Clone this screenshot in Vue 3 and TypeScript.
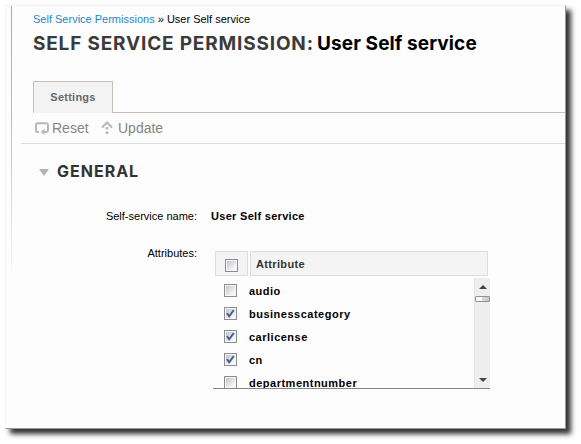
<script setup lang="ts">
import { ref } from 'vue'

interface AttributeRow {
  name: string
  checked: boolean
}

const allChecked = ref(false)
const rows = ref<AttributeRow[]>([
  { name: 'audio', checked: false },
  { name: 'businesscategory', checked: true },
  { name: 'carlicense', checked: true },
  { name: 'cn', checked: true },
  { name: 'departmentnumber', checked: false },
])

function toggleAll() {
  allChecked.value = !allChecked.value
  rows.value.forEach((row) => (row.checked = allChecked.value))
}
</script>

<template>
  <div class="desk">
  <div class="window">
    <main class="page">
      <nav class="crumbs"><a class="link">Self Service Permissions</a> » User Self service</nav>
      <h1 class="title"><span class="kind">SELF SERVICE PERMISSION:</span><span class="entity">User Self service</span></h1>
      <div class="tabs">
        <div class="tab">Settings</div>
        <div class="tab-rest"></div>
      </div>
      <div class="toolbar">
        <a class="action reset">
          <svg width="14" height="13" viewBox="0 0 14 13">
            <path d="M4 10H2.5Q1 10 1 8.5V3Q1 1.2 2.8 1.2H11.2Q13 1.2 13 3V8Q13 10 11 10H8.5" fill="none" stroke="#b9b9b9" stroke-width="2" />
            <path d="M9.5 6.5V13L5.8 10Z" fill="#b9b9b9" />
          </svg>
          <span>Reset</span>
        </a>
        <a class="action update">
          <svg width="12" height="14" viewBox="0 0 12 14">
            <path d="M1 6.5L6 1.6L11 6.5" fill="none" stroke="#b9b9b9" stroke-width="2.2" />
            <path d="M4.6 6H7.4V8.6H4.6ZM4.6 10.4H7.4V13H4.6Z" fill="#b9b9b9" />
          </svg>
          <span>Update</span>
        </a>
      </div>
      <h2 class="section">
        <svg width="10" height="7" viewBox="0 0 10 7"><path d="M0 0H10L5 7Z" fill="#b3b3b3" /></svg>
        <span>GENERAL</span>
      </h2>
      <div class="field name-field">
        <div class="label">Self-service name:</div>
        <div class="value">User Self service</div>
      </div>
      <div class="field">
        <div class="label">Attributes:</div>
        <div class="table">
          <div class="head">
            <div class="head-check"><span class="box" @click="toggleAll"></span></div>
            <div class="head-name">Attribute</div>
          </div>
          <div class="body">
            <div class="rows">
              <div v-for="row in rows" :key="row.name" class="row">
                <span class="box" @click="row.checked = !row.checked">
                  <svg v-if="row.checked" width="9" height="9" viewBox="0 0 9 9">
                    <path d="M1 4.2L3.2 7.3L7.8 1" fill="none" stroke="#4a5f97" stroke-width="2" />
                  </svg>
                </span>
                <span class="name">{{ row.name }}</span>
              </div>
            </div>
            <div class="scroll">
              <svg width="8" height="4" viewBox="0 0 8 4"><path d="M0 4L4 0L8 4Z" fill="#444" /></svg>
              <div class="thumb"></div>
              <svg class="down" width="8" height="4" viewBox="0 0 8 4"><path d="M0 0H8L4 4Z" fill="#444" /></svg>
            </div>
          </div>
        </div>
      </div>
    </main>
  </div>
  </div>
</template>

<style>
body {
  background: #fff;
}
</style>

<style scoped>
.desk {
  box-sizing: border-box;
  height: 444px;
  padding: 5px 0 0 5px;
  overflow: hidden;
}
.window {
  box-sizing: border-box;
  width: 561px;
  height: 424px;
  padding-left: 5px;
  background: #fdfdfd;
  border-top: 1px solid #f3f3f3;
  border-left: 1px solid #f5f5f5;
  border-right: 1px solid #999;
  border-bottom: 1px solid #999;
  box-shadow: 5px 5px 5px 0 #333;
  font-family: "Liberation Sans", Arial, sans-serif;
  font-size: 11px;
  color: #000;
}
.page {
  box-sizing: border-box;
  height: 422px;
  padding-left: 10px;
  background: linear-gradient(#aaa, #bbb 40%, #fdfdfd) 0 0 / 1px 280px no-repeat;
}
.crumbs {
  height: 26px;
  padding: 6px 0 0 12px;
  box-sizing: border-box;
  line-height: 15px;
}
.link {
  color: #1d85cf;
}
.title {
  display: flex;
  gap: 5px;
  margin: 0;
  padding-left: 12px;
  height: 49px;
  line-height: 24px;
  font-family: Inter, sans-serif;
  font-size: 19px;
  font-weight: 700;
  white-space: nowrap;
}
.kind {
  width: 279px;
  color: #3b3b3b;
  letter-spacing: 0.82px;
}
.entity {
  letter-spacing: 0.1px;
}
.tabs {
  display: flex;
  height: 32px;
  padding-left: 12px;
}
.tab {
  box-sizing: border-box;
  width: 80px;
  border: 1px solid #c9c0b5;
  border-bottom: 0;
  background: #f3f3f3;
  color: #686868;
  font-weight: 700;
  line-height: 31px;
  text-align: center;
  letter-spacing: 0.25px;
}
.tab-rest {
  flex: 1;
  border-bottom: 1px solid #c9c0b5;
}
.toolbar {
  box-sizing: border-box;
  display: flex;
  height: 31px;
  padding: 7px 0 0 14px;
  border-bottom: 1px solid #dcdcdc;
  color: #858585;
  font-size: 14px;
  line-height: 17px;
}
.action {
  display: flex;
}
.reset {
  width: 66px;
  gap: 3px;
}
.update {
  gap: 5px;
}
.reset svg {
  margin-top: 2px;
}
.update svg {
  margin-top: 1px;
}
.section {
  display: flex;
  align-items: center;
  gap: 8px;
  margin: 15px 0 0;
  padding-left: 18px;
  height: 24px;
  color: #333;
  font-family: Inter, sans-serif;
  font-size: 16px;
  font-weight: 700;
  letter-spacing: 1px;
}
.section svg {
  margin-top: 2px;
}
.field {
  display: flex;
}
.name-field {
  padding-top: 26px;
  height: 37px;
}
.label {
  width: 176px;
  line-height: 15px;
  text-align: right;
}
.value {
  margin-left: 14px;
  font-weight: 700;
  line-height: 15px;
  letter-spacing: 0.3px;
}
.table {
  width: 277px;
  margin-left: 16px;
  padding-top: 5px;
  font-weight: 700;
  letter-spacing: 0.35px;
}
.head {
  display: flex;
  gap: 2px;
  padding-left: 2px;
}
.head-check,
.head-name {
  box-sizing: border-box;
  height: 25px;
  border: 1px solid #dedede;
  background: #f4f4f4;
}
.head-check {
  width: 33px;
  padding: 7px 0 0 9px;
}
.head-name {
  width: 238px;
  padding-left: 5px;
  color: #333;
  line-height: 25px;
}
.box {
  box-sizing: border-box;
  display: flex;
  width: 13px;
  height: 13px;
  border: 1px solid #8b8d8f;
  background: linear-gradient(135deg, #bfc4cc, #f6f6f6 80%) content-box, #f7f7f7;
  padding: 1px;
  flex: none;
}
.body {
  box-sizing: border-box;
  display: flex;
  height: 111px;
  margin-top: 2px;
  border-bottom: 1px solid #858585;
  overflow: hidden;
}
.rows {
  flex: 1;
  padding-top: 1px;
}
.row {
  display: flex;
  align-items: center;
  gap: 12px;
  height: 23px;
  padding-left: 11px;
}
.name {
  letter-spacing: 0.5px;
}
.scroll {
  box-sizing: border-box;
  display: flex;
  flex-direction: column;
  align-items: center;
  width: 16px;
  padding: 7px 0 6px;
  background: #eee;
  border-left: 1px solid #e4e4e4;
}
.thumb {
  box-sizing: border-box;
  width: 15px;
  height: 6px;
  margin-top: 7px;
  border: 1px solid #939196;
  border-radius: 1px;
  background: linear-gradient(90deg, #fafafa 45%, #dadada 50%, #c8c8c8);
}
.down {
  margin-top: auto;
}
</style>
